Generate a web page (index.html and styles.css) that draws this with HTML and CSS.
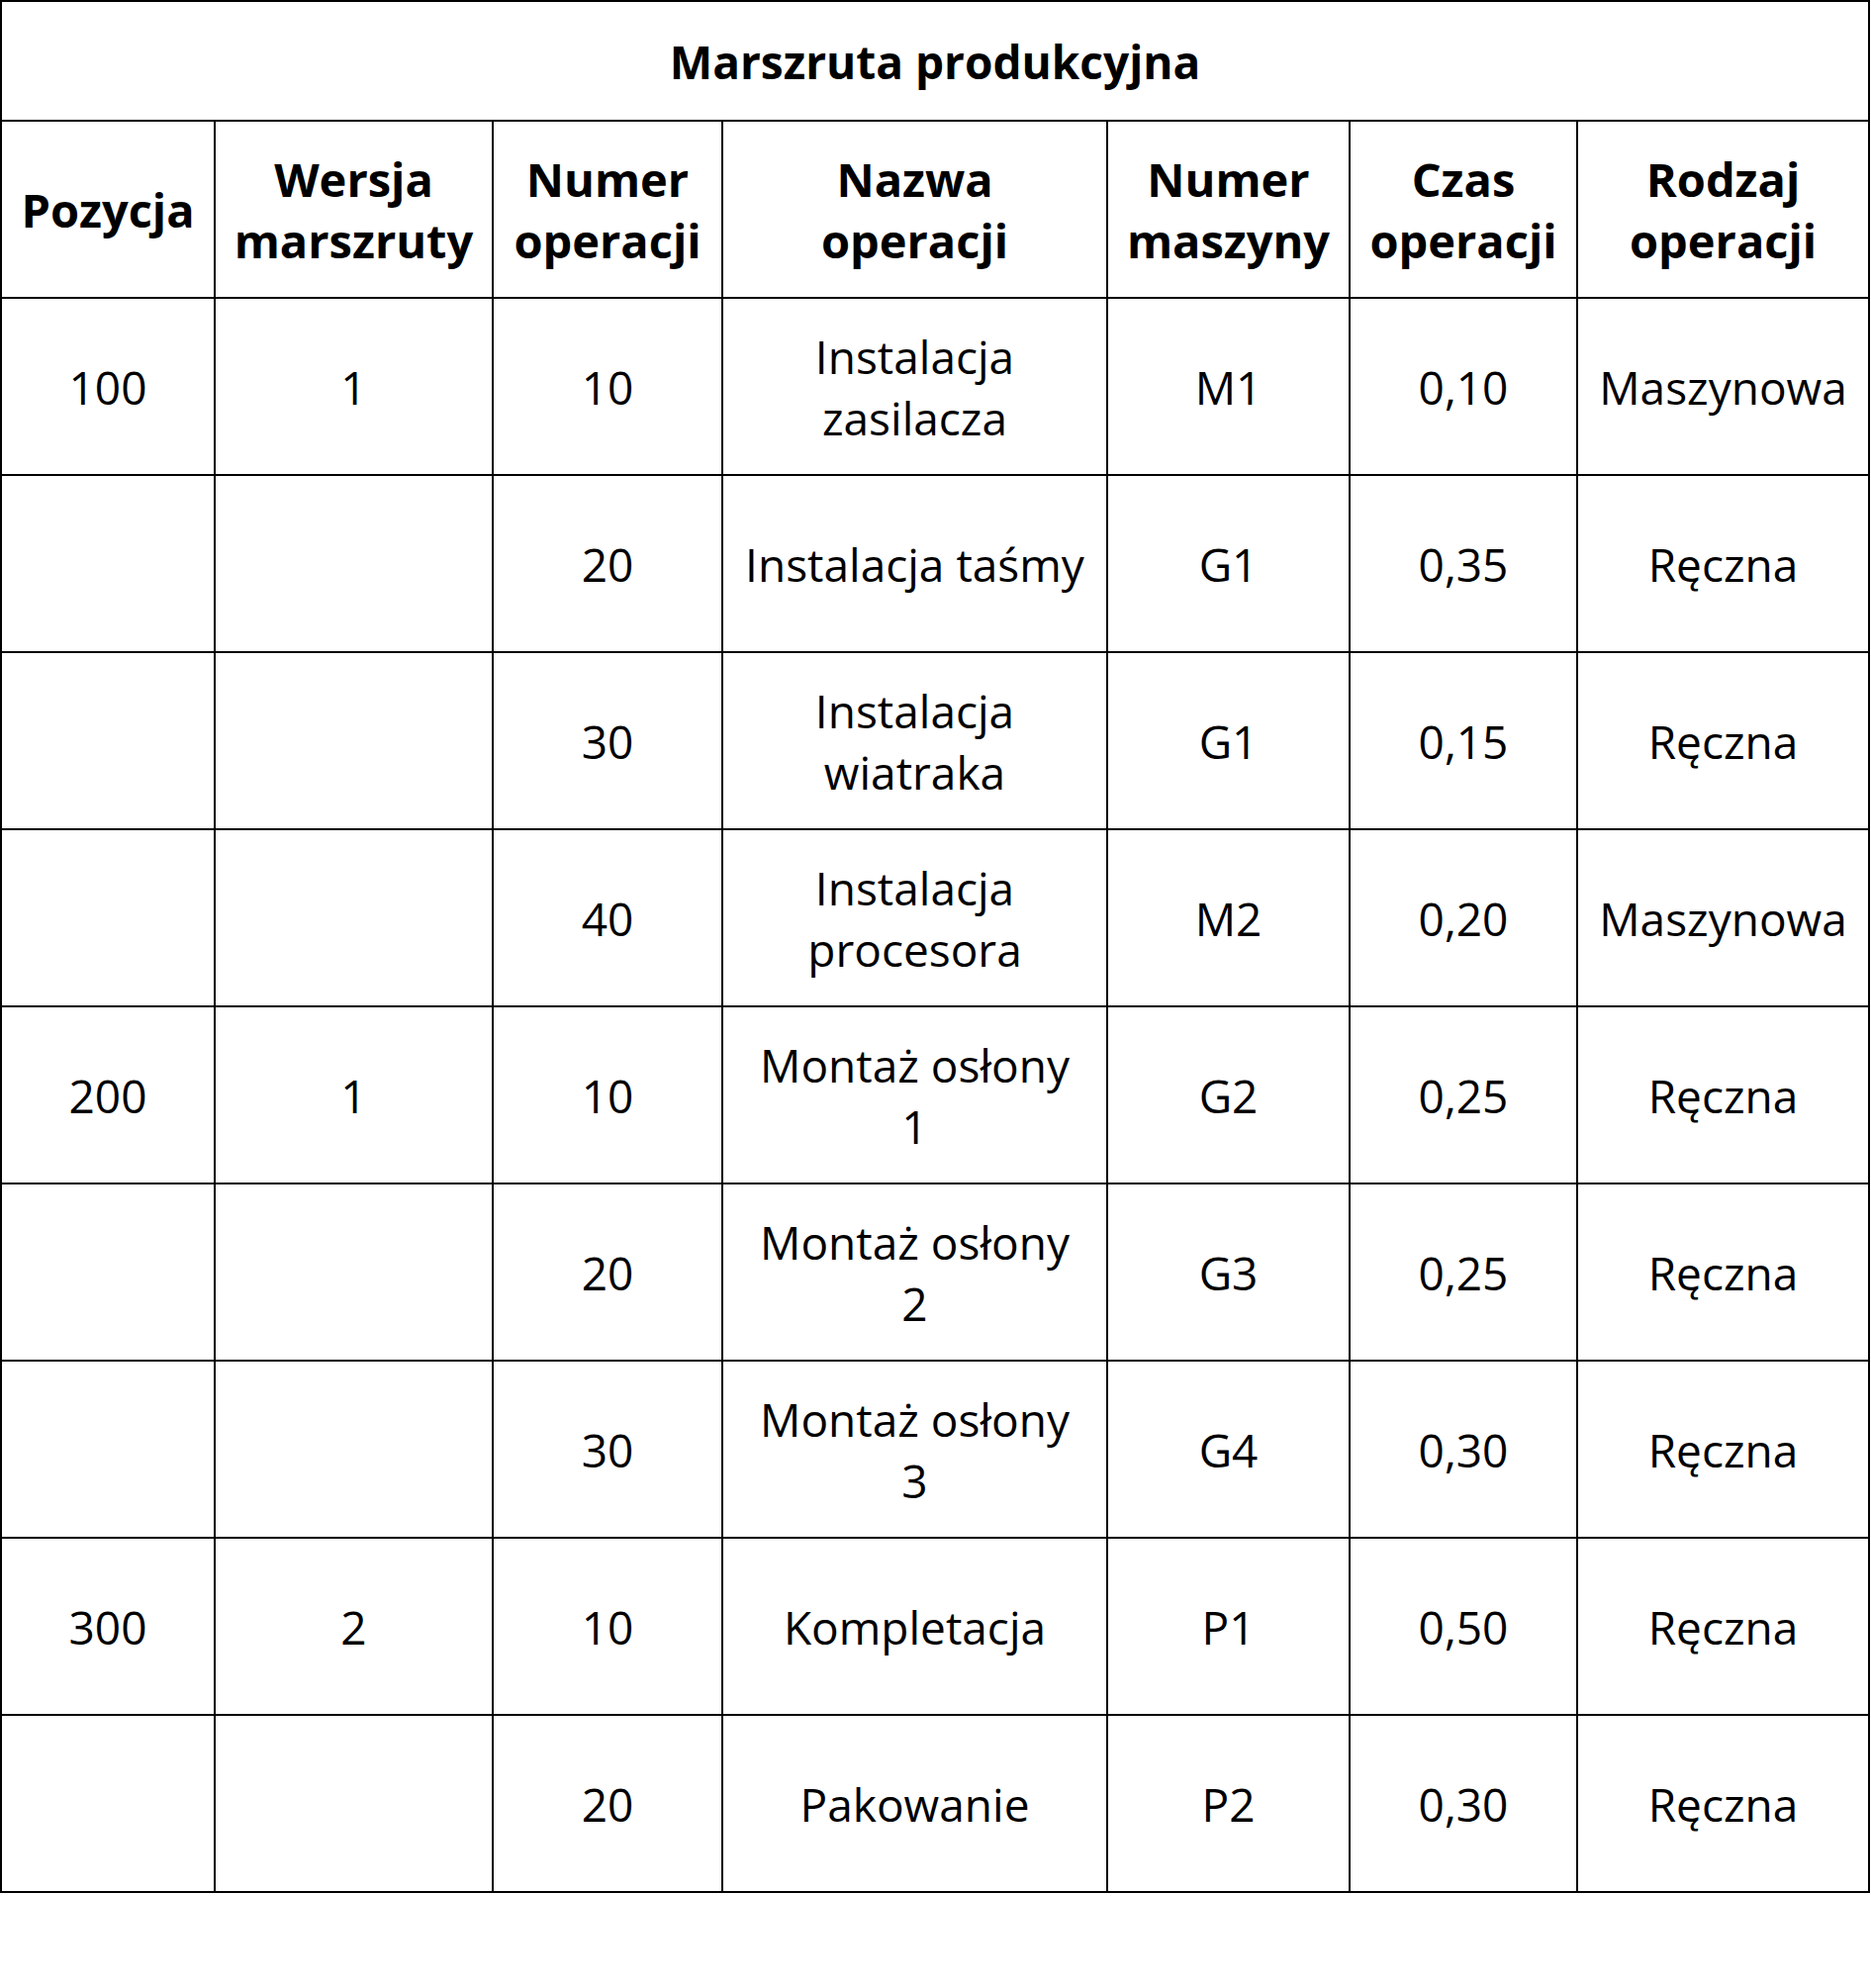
FILE: index.html
```html
<!DOCTYPE html>
<html lang="pl">
<head>
<meta charset="utf-8">
<title>Marszruta produkcyjna</title>
<link rel="stylesheet" href="styles.css">
</head>
<body>
<table class="routing">
  <colgroup>
    <col class="c1"><col class="c2"><col class="c3"><col class="c4"><col class="c5"><col class="c6"><col class="c7">
  </colgroup>
  <thead>
    <tr class="title-row"><th colspan="7">Marszruta produkcyjna</th></tr>
    <tr class="head-row">
      <th>Pozycja</th>
      <th>Wersja<br>marszruty</th>
      <th>Numer<br>operacji</th>
      <th>Nazwa<br>operacji</th>
      <th>Numer<br>maszyny</th>
      <th>Czas<br>operacji</th>
      <th>Rodzaj<br>operacji</th>
    </tr>
  </thead>
  <tbody>
    <tr><td>100</td><td>1</td><td>10</td><td>Instalacja<br>zasilacza</td><td>M1</td><td>0,10</td><td>Maszynowa</td></tr>
    <tr><td></td><td></td><td>20</td><td>Instalacja taśmy</td><td>G1</td><td>0,35</td><td>Ręczna</td></tr>
    <tr><td></td><td></td><td>30</td><td>Instalacja<br>wiatraka</td><td>G1</td><td>0,15</td><td>Ręczna</td></tr>
    <tr><td></td><td></td><td>40</td><td>Instalacja<br>procesora</td><td>M2</td><td>0,20</td><td>Maszynowa</td></tr>
    <tr><td>200</td><td>1</td><td>10</td><td>Montaż osłony<br>1</td><td>G2</td><td>0,25</td><td>Ręczna</td></tr>
    <tr><td></td><td></td><td>20</td><td>Montaż osłony<br>2</td><td>G3</td><td>0,25</td><td>Ręczna</td></tr>
    <tr><td></td><td></td><td>30</td><td>Montaż osłony<br>3</td><td>G4</td><td>0,30</td><td>Ręczna</td></tr>
    <tr><td>300</td><td>2</td><td>10</td><td>Kompletacja</td><td>P1</td><td>0,50</td><td>Ręczna</td></tr>
    <tr><td></td><td></td><td>20</td><td>Pakowanie</td><td>P2</td><td>0,30</td><td>Ręczna</td></tr>
  </tbody>
</table>
</body>
</html>
```
FILE: styles.css
```css
html, body {
  margin: 0;
  padding: 0;
  background: #fff;
}

.routing {
  border-collapse: separate;
  border-spacing: 2px;
  background: #000;
  table-layout: fixed;
  width: 1890px;
  font-family: "Open Sans", "Noto Sans", sans-serif;
  color: #000;
}

.c1 { width: 214px; }
.c2 { width: 279px; }
.c3 { width: 230px; }
.c4 { width: 387px; }
.c5 { width: 243px; }
.c6 { width: 228px; }
.c7 { width: 293px; }

.routing th,
.routing td {
  background: #fff;
  padding: 0;
  text-align: center;
  vertical-align: middle;
  line-height: 62px;
}

.routing th {
  font-size: 47px;
  font-weight: 700;
}

.title-row th {
  height: 119px;
  font-size: 46px;
}

.head-row th {
  height: 177px;
}

.routing td {
  font-size: 46px;
  font-weight: 400;
  height: 177px;
}
```
